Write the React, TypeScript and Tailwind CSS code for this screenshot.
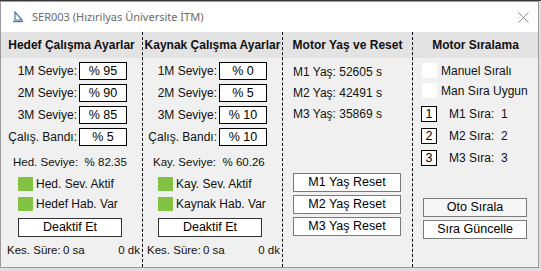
import React from "react";

const font = { fontFamily: '"Liberation Sans", Arial, sans-serif' };

type SettingsProps = {
  title: string;
  rows: [string, string][];
  levelLabel: string;
  levelValue: string;
  flags: string[];
  padClass: string;
  colClass: string;
};

function SettingsColumn({ title, rows, levelLabel, levelValue, flags, padClass, colClass }: SettingsProps) {
  return (
    <div className={`flex flex-col border-r border-dashed border-black ${colClass}`}>
      <div className="h-[26px] flex items-center justify-center bg-[#e3e3e3] text-[12px] font-bold text-[#111] whitespace-nowrap">
        {title}
      </div>
      <div className={`flex flex-col ${padClass}`}>
        {/* level inputs */}
        <div className="mt-[4px] flex flex-col gap-[4px]">
          {rows.map(([label, value]) => (
            <div key={label} className="flex items-center h-[18px]">
              <span className="w-[74px] text-right text-[12px] text-[#111] whitespace-nowrap">{label}</span>
              <div className="ml-[2px] w-[48px] h-[18px] bg-white border border-black flex items-center justify-center text-[12.5px] text-black">
                {value}
              </div>
            </div>
          ))}
        </div>
        <div className="mt-[9px] pl-[10px] h-[14px] leading-[14px] text-[11.5px] text-[#111] whitespace-pre">
          {levelLabel}  {levelValue}
        </div>
        <div className="mt-[8px] flex flex-col gap-[6px] pl-[15px]">
          {flags.map((f) => (
            <div key={f} className="flex items-center h-[14px]">
              <div className="w-[15px] h-[14px] bg-[#80c342]" />
              <span className="ml-[3px] text-[12px] text-[#111] whitespace-nowrap">{f}</span>
            </div>
          ))}
        </div>
        <div className="mt-[7px] ml-[15px] w-[104px] h-[19px] bg-white border border-[#333] flex items-center justify-center text-[12.5px] text-black">
          Deaktif Et
        </div>
        <div className="mt-[6px] h-[14px] leading-[14px] flex text-[11.5px] text-[#111] whitespace-nowrap">
          <span className="pl-[4px] w-[60px]">Kes. Süre:</span>
          <span>0 sa</span>
          <span className="ml-auto w-[30px] text-right mr-[2px]">0 dk</span>
        </div>
      </div>
    </div>
  );
}

function GrayButton({ label, white }: { label: string; white?: boolean }) {
  return (
    <div
      className={`h-[19px] border border-[#7a7a7a] flex items-center justify-center text-[12.5px] text-black ${
        white ? "bg-white" : "bg-[#f7f7f7]"
      }`}
    >
      {label}
    </div>
  );
}

export default function App() {
  return (
    <div className="w-[541px] h-[271px] bg-[#dedede] overflow-hidden" style={font}>
      <div className="h-[1px] bg-[#3a3a3a]" />
      <div className="w-[539px] h-[267px] border border-[#9a9a9a] flex flex-col bg-white">
        {/* title bar */}
        <div className="h-[30px] flex items-center bg-white shrink-0">
          <svg className="ml-[11px]" width="12" height="12" viewBox="0 0 12 12">
            <path d="M3 1 L3 9 L10 9 Z" fill="none" stroke="#4a78a8" strokeWidth="1.2" />
            <path d="M1 10.5 L11 10.5" stroke="#4a78a8" strokeWidth="1.4" />
          </svg>
          <span
            className="ml-[8px] text-[11px] text-[#6a6a6a] whitespace-nowrap"
            style={{ fontFamily: '"Noto Sans", "Open Sans", sans-serif' }}
          >
            SER003 (Hızırilyas Üniversite İTM)
          </span>
          <svg className="ml-auto mr-[9px]" width="11" height="11" viewBox="0 0 11 11">
            <path d="M0.5 0.5 L10.5 10.5 M10.5 0.5 L0.5 10.5" stroke="#8c8c8c" strokeWidth="1" />
          </svg>
        </div>

        {/* body */}
        <div className="flex-1 flex bg-[#f0f0f0]">
          <SettingsColumn
            title="Hedef Çalışma Ayarlar"
            rows={[
              ["1M Seviye:", "% 95"],
              ["2M Seviye:", "% 90"],
              ["3M Seviye:", "% 85"],
              ["Çalış. Bandı:", "% 5"],
            ]}
            levelLabel="Hed. Seviye:"
            levelValue="% 82.35"
            flags={["Hed. Sev. Aktif", "Hedef Hab. Var"]}
            padClass="pl-[2px]"
            colClass="w-[142px]"
          />
          <SettingsColumn
            title="Kaynak Çalışma Ayarlar"
            rows={[
              ["1M Seviye:", "% 0"],
              ["2M Seviye:", "% 5"],
              ["3M Seviye:", "% 10"],
              ["Çalış. Bandı:", "% 10"],
            ]}
            levelLabel="Kay. Seviye:"
            levelValue="% 60.26"
            flags={["Kay. Sev. Aktif", "Kaynak Hab. Var"]}
            padClass="pl-0"
            colClass="w-[140px]"
          />

          {/* motor age */}
          <div className="w-[130px] flex flex-col border-r border-dashed border-black">
            <div className="h-[26px] flex items-center justify-center bg-[#e3e3e3] text-[12px] font-bold text-[#111] whitespace-nowrap">
              Motor Yaş ve Reset
            </div>
            <div className="pl-[10px] mt-[7px] flex flex-col gap-[7px] text-[12px] text-[#111]">
              <span className="h-[14px] leading-[14px]">M1 Yaş: 52605 s</span>
              <span className="h-[14px] leading-[14px]">M2 Yaş: 42491 s</span>
              <span className="h-[14px] leading-[14px]">M3 Yaş: 35869 s</span>
            </div>
            <div className="mt-[52px] ml-[10px] w-[108px] flex flex-col gap-[3px]">
              <GrayButton label="M1 Yaş Reset" white />
              <GrayButton label="M2 Yaş Reset" white />
              <GrayButton label="M3 Yaş Reset" white />
            </div>
          </div>

          {/* motor order */}
          <div className="flex-1 flex flex-col">
            <div className="h-[26px] flex items-center justify-center bg-[#e3e3e3] text-[12px] font-bold text-[#111] whitespace-nowrap">
              Motor Sıralama
            </div>
            <div className="mt-[5px] pl-[9px] flex flex-col gap-[5px]">
              {["Manuel Sıralı", "Man Sıra Uygun"].map((t) => (
                <div key={t} className="flex items-center h-[15px]">
                  <div className="w-[15px] h-[15px] bg-white" />
                  <span className="ml-[4px] text-[12px] text-[#111] whitespace-nowrap">{t}</span>
                </div>
              ))}
            </div>
            <div className="mt-[8px] pl-[8px] flex flex-col gap-[6px]">
              {["1", "2", "3"].map((n) => (
                <div key={n} className="flex items-center h-[16px]">
                  <div className="w-[16px] h-[16px] bg-white border border-black flex items-center justify-center text-[12.5px] text-black">
                    {n}
                  </div>
                  <span className="ml-[12px] text-[12px] text-[#111] whitespace-pre">M{n} Sıra:  {n}</span>
                </div>
              ))}
            </div>
            <div className="mt-[32px] ml-[10px] w-[104px] flex flex-col gap-[3px]">
              <GrayButton label="Oto Sırala" />
              <GrayButton label="Sıra Güncelle" white />
            </div>
          </div>
        </div>
      </div>
    </div>
  );
}
